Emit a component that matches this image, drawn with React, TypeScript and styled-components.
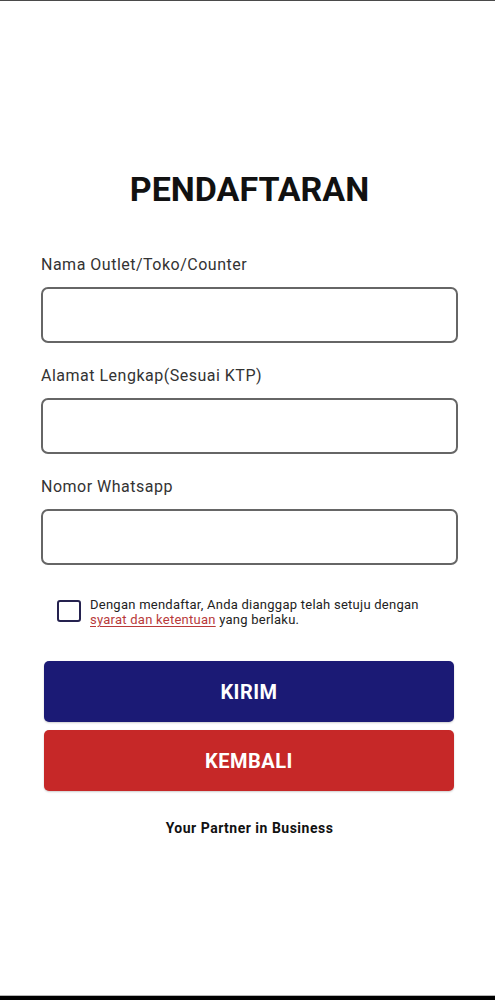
import { useState } from 'react';
import styled, { createGlobalStyle } from 'styled-components';

const GlobalStyle = createGlobalStyle`
  html, body {
    margin: 0;
    padding: 0;
    background: #ffffff;
    font-family: Roboto, "Liberation Sans", Arial, sans-serif;
  }
  * {
    box-sizing: border-box;
  }
`;

const Screen = styled.div`
  min-height: 100vh;
  display: flex;
  flex-direction: column;
  border-top: 1px solid #4a4a4a;
  border-bottom: 4px solid #000;
  box-shadow: inset 0 -1px 0 #b5b5b5;
`;

const Form = styled.form`
  flex: 1;
  display: flex;
  flex-direction: column;
  padding: 168px 37px 0 41px;
`;

const Title = styled.h1`
  margin: 0 0 46px;
  font-size: 34px;
  line-height: 40px;
  font-weight: 700;
  text-align: center;
  color: #111;
`;

const Field = styled.div`
  display: flex;
  flex-direction: column;
  margin-bottom: 23px;
`;

const Label = styled.label`
  font-size: 16px;
  line-height: 19px;
  letter-spacing: 0.5px;
  color: #333;
  margin-bottom: 13px;
`;

const Input = styled.input`
  height: 56px;
  width: 100%;
  border: 2px solid #666;
  border-radius: 7px;
  padding: 0 14px;
  font-size: 16px;
  font-family: inherit;
  background: #fff;
  outline: none;
`;

const AgreeRow = styled.div`
  display: flex;
  align-items: flex-start;
  margin: 9px 0 34px 16px;
`;

const CheckBox = styled.button<{ checked: boolean }>`
  flex: none;
  width: 24px;
  height: 22px;
  margin-top: 3px;
  margin-right: 9px;
  padding: 0;
  border: 2.5px solid #25224f;
  border-radius: 3px;
  background: ${(p) => (p.checked ? '#25224f' : '#fff')};
  cursor: pointer;
`;

const AgreeText = styled.p`
  margin: 0;
  font-size: 13px;
  line-height: 15px;
  letter-spacing: 0.25px;
  color: #222;
`;

const TermsLink = styled.a`
  color: #b83a3a;
  text-decoration: underline;
  text-underline-offset: 2px;
`;

const Actions = styled.div`
  display: flex;
  flex-direction: column;
  gap: 8px;
  margin: 0 4px 0 3px;
`;

const ActionButton = styled.button<{ variant: 'primary' | 'danger' }>`
  height: 61px;
  border: none;
  border-radius: 5px;
  background: ${(p) => (p.variant === 'primary' ? '#1b1a75' : '#c62828')};
  color: #fff;
  font-family: inherit;
  font-size: 20px;
  font-weight: 700;
  letter-spacing: 0.5px;
  box-shadow: 0 1px 2px rgba(0, 0, 0, 0.2);
  cursor: pointer;
`;

const Tagline = styled.p`
  margin: 29px 0 0;
  font-size: 14px;
  line-height: 17px;
  font-weight: 700;
  letter-spacing: 0.5px;
  text-align: center;
  color: #111;
`;

const fields = [
  { id: 'outlet', label: 'Nama Outlet/Toko/Counter' },
  { id: 'alamat', label: 'Alamat Lengkap(Sesuai KTP)' },
  { id: 'whatsapp', label: 'Nomor Whatsapp' },
];

export default function App() {
  const [agree, setAgree] = useState(false);

  return (
    <Screen>
      <GlobalStyle />
      <Form onSubmit={(e) => e.preventDefault()}>
        <Title>PENDAFTARAN</Title>
        {fields.map((f) => (
          <Field key={f.id}>
            <Label htmlFor={f.id}>{f.label}</Label>
            <Input id={f.id} type="text" />
          </Field>
        ))}
        <AgreeRow>
          <CheckBox type="button" checked={agree} onClick={() => setAgree(!agree)} />
          <AgreeText>
            Dengan mendaftar, Anda dianggap telah setuju dengan
            <br />
            <TermsLink href="#">syarat dan ketentuan</TermsLink> yang berlaku.
          </AgreeText>
        </AgreeRow>
        <Actions>
          <ActionButton type="submit" variant="primary">KIRIM</ActionButton>
          <ActionButton type="button" variant="danger">KEMBALI</ActionButton>
        </Actions>
        <Tagline>Your Partner in Business</Tagline>
      </Form>
    </Screen>
  );
}
